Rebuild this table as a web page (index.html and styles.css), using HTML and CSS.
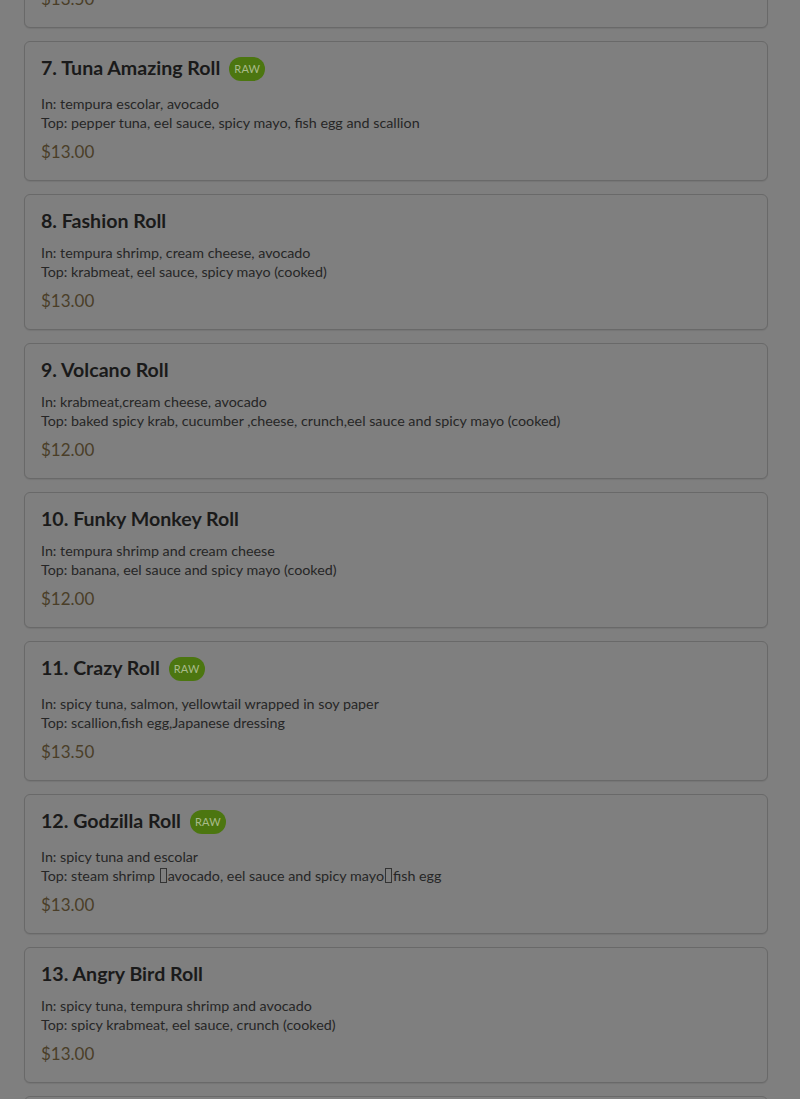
FILE: index.html
```html
<!DOCTYPE html>
<html lang="en">
<head>
<meta charset="utf-8">
<title>Menu</title>
<link rel="stylesheet" href="styles.css">
</head>
<body>
<div class="menu">
  <div class="card">
    <div class="title-row"><h3 class="title">6. Rainbow Roll</h3></div>
    <p class="desc">In: krabmeat, cucumber, avocado<br>Top: tuna, salmon, yellowtail, white fish</p>
    <div class="price">$13.50</div>
  </div>
  <div class="card">
    <div class="title-row"><h3 class="title">7. Tuna Amazing Roll</h3><span class="badge">RAW</span></div>
    <p class="desc">In: tempura escolar, avocado<br>Top: pepper tuna, eel sauce, spicy mayo, fish egg and scallion</p>
    <div class="price">$13.00</div>
  </div>
  <div class="card">
    <div class="title-row"><h3 class="title">8. Fashion Roll</h3></div>
    <p class="desc">In: tempura shrimp, cream cheese, avocado<br>Top: krabmeat, eel sauce, spicy mayo (cooked)</p>
    <div class="price">$13.00</div>
  </div>
  <div class="card">
    <div class="title-row"><h3 class="title">9. Volcano Roll</h3></div>
    <p class="desc">In: krabmeat,cream cheese, avocado<br>Top: baked spicy krab, cucumber ,cheese, crunch,eel sauce and spicy mayo (cooked)</p>
    <div class="price">$12.00</div>
  </div>
  <div class="card">
    <div class="title-row"><h3 class="title">10. Funky Monkey Roll</h3></div>
    <p class="desc">In: tempura shrimp and cream cheese<br>Top: banana, eel sauce and spicy mayo (cooked)</p>
    <div class="price">$12.00</div>
  </div>
  <div class="card">
    <div class="title-row"><h3 class="title">11. Crazy Roll</h3><span class="badge">RAW</span></div>
    <p class="desc">In: spicy tuna, salmon, yellowtail wrapped in soy paper<br>Top: scallion,fish egg,Japanese dressing</p>
    <div class="price">$13.50</div>
  </div>
  <div class="card">
    <div class="title-row"><h3 class="title">12. Godzilla Roll</h3><span class="badge">RAW</span></div>
    <p class="desc">In: spicy tuna and escolar<br>Top: steam shrimp <span class="tofu"></span>avocado, eel sauce and spicy mayo<span class="tofu"></span>fish egg</p>
    <div class="price">$13.00</div>
  </div>
  <div class="card">
    <div class="title-row"><h3 class="title">13. Angry Bird Roll</h3></div>
    <p class="desc">In: spicy tuna, tempura shrimp and avocado<br>Top: spicy krabmeat, eel sauce, crunch (cooked)</p>
    <div class="price">$13.00</div>
  </div>
  <div class="card">
    <div class="title-row"><h3 class="title">14. Dragon Roll</h3></div>
    <p class="desc">In: tempura shrimp, cucumber<br>Top: eel, avocado, eel sauce</p>
    <div class="price">$13.00</div>
  </div>
</div>
</body>
</html>
```
FILE: styles.css
```css
html, body {
  margin: 0;
  padding: 0;
  background: #7f7f7f;
  font-family: Lato, "Open Sans", sans-serif;
  color: #1c1c1c;
}
.menu {
  display: flex;
  flex-direction: column;
  gap: 13px;
  padding: 0 32px 0 24px;
  margin-top: -108px;
}
.card {
  border: 1px solid #696969;
  border-radius: 6px;
  background: #7f7f7f;
  padding: 12px 16px 16px 16px;
  box-shadow: 0 1px 1px rgba(0,0,0,0.08);
}
.title-row {
  display: flex;
  align-items: flex-start;
  gap: 9px;
}
.title {
  margin: 0;
  font-size: 19.6px;
  line-height: 28px;
  font-weight: 700;
  color: #1a1a1a;
}
.badge {
  margin: 3px 0 5px 0;
  height: 24px;
  line-height: 24px;
  padding: 0 5px;
  border-radius: 12px;
  background: #4c7610;
  color: #a9bb8a;
  font-size: 11px;
  font-weight: 400;
  letter-spacing: 0.2px;
}
.desc {
  margin: 8px 0 0 0;
  font-size: 14.3px;
  line-height: 19px;
  color: #262626;
}
.tofu {
  display: inline-block;
  width: 5px;
  height: 13px;
  border: 1px solid #333;
  vertical-align: -2px;
  margin: 0 1px;
}
.price {
  margin-top: 8px;
  font-size: 17px;
  line-height: 24px;
  color: #4a3e28;
}
```
